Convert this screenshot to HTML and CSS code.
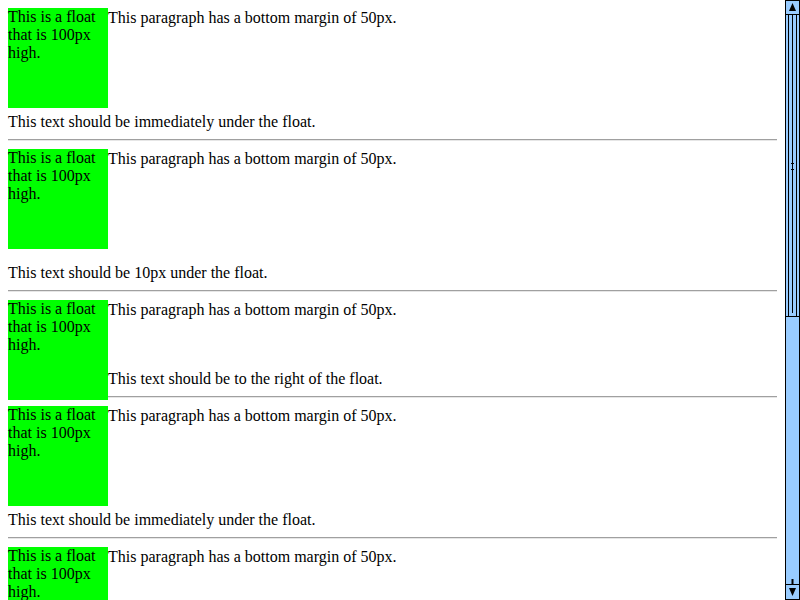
FILE: index.html
```html
<!DOCTYPE html>
<html>
<head>
<meta charset="utf-8">
<title>Float and clear test</title>
<link rel="stylesheet" href="styles.css">
</head>
<body>
<div class="window">
  <div class="page">
    <div class="float">This is a float that is 100px high.</div>
    <p class="para">This paragraph has a bottom margin of 50px.</p>
    <p class="clear near">This text should be immediately under the float.</p>
    <hr class="rule">

    <div class="float">This is a float that is 100px high.</div>
    <p class="para">This paragraph has a bottom margin of 50px.</p>
    <p class="clear far">This text should be 10px under the float.</p>
    <hr class="rule">

    <div class="float">This is a float that is 100px high.</div>
    <p class="para">This paragraph has a bottom margin of 50px.</p>
    <p class="plain">This text should be to the right of the float.</p>
    <hr class="rule beside">

    <div class="float">This is a float that is 100px high.</div>
    <p class="para">This paragraph has a bottom margin of 50px.</p>
    <p class="clear near">This text should be immediately under the float.</p>
    <hr class="rule">

    <div class="float">This is a float that is 100px high.</div>
    <p class="para">This paragraph has a bottom margin of 50px.</p>
    <p class="clear far">This text should be 10px under the float.</p>
    <hr class="rule">
  </div>
  <div class="scrollbar">
    <svg width="15" height="600" viewBox="0 0 15 600" xmlns="http://www.w3.org/2000/svg">
      <rect x="0" y="0" width="15" height="600" fill="#99ccff"/>
      <line x1="0.5" y1="0" x2="0.5" y2="600" stroke="#000"/>
      <line x1="14.5" y1="0" x2="14.5" y2="600" stroke="#000"/>
      <!-- up arrow -->
      <rect x="0.5" y="0.5" width="14" height="14" fill="#99ccff" stroke="#000"/>
      <polygon points="7.5,3 11,11 4,11" fill="#000"/>
      <!-- thumb -->
      <line x1="3.5" y1="15" x2="3.5" y2="316" stroke="#000"/>
      <line x1="11.5" y1="15" x2="11.5" y2="316" stroke="#000"/>
      <line x1="7.5" y1="15" x2="7.5" y2="313" stroke="#000"/>
      <line x1="0" y1="316.5" x2="15" y2="316.5" stroke="#000"/>
      <line x1="6" y1="163.5" x2="9" y2="163.5" stroke="#000"/>
      <line x1="6" y1="169.5" x2="9" y2="169.5" stroke="#000"/>
      <!-- down arrow -->
      <line x1="7.5" y1="579" x2="7.5" y2="584" stroke="#000" stroke-width="2"/>
      <rect x="0.5" y="584.5" width="14" height="15" fill="#99ccff" stroke="#000"/>
      <polygon points="4,588 11,588 7.5,596" fill="#000"/>
    </svg>
  </div>
</div>
</body>
</html>
```

FILE: styles.css
```css
html, body {
  margin: 0;
  padding: 0;
  background: #ffffff;
}

.window {
  display: flex;
  width: 800px;
  height: 600px;
  overflow: hidden;
}

.page {
  flex: 1;
  min-width: 0;
  height: 600px;
  box-sizing: border-box;
  padding: 8px;
  overflow: hidden;
  font-family: "Liberation Serif", "Times New Roman", serif;
  font-size: 16px;
  color: #000000;
}

.float {
  float: left;
  width: 100px;
  height: 100px;
  background: #00ff00;
  line-height: 18px;
}

.para {
  margin: 0 0 50px 0;
  line-height: 19px;
}

.clear {
  clear: left;
  margin: 0;
  line-height: 19px;
}

.near {
  padding-top: 4px;
}

.far {
  padding-top: 14px;
}

.plain {
  margin: 0;
  line-height: 19px;
}

.rule {
  margin: 8px 0;
  height: 0;
  border: none;
  border-top: 1px solid #a0a0a0;
  border-bottom: 1px solid #e6e6e6;
}

.beside {
  overflow: hidden;
}

.scrollbar {
  width: 15px;
  height: 600px;
  flex: none;
}

.scrollbar svg {
  display: block;
}
```
